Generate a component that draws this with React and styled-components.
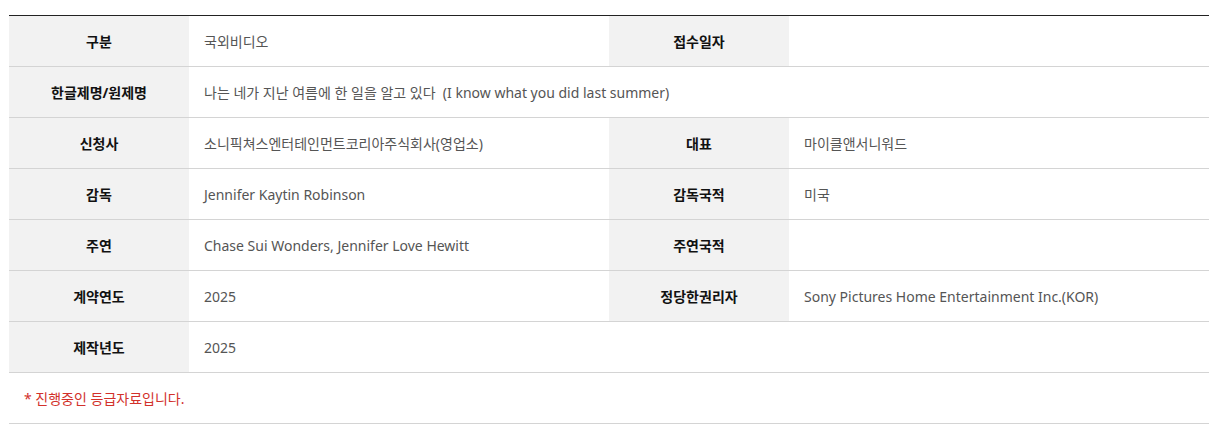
import React from 'react'
import styled, { createGlobalStyle } from 'styled-components'

const Global = createGlobalStyle`
  body {
    margin: 0;
    background: #fff;
    font-family: 'Noto Sans', 'Noto Sans CJK KR', sans-serif;
  }
`;

const Wrap = styled.div`
  padding: 15px 11px 0 9px;
`;

const Table = styled.div`
  border-top: 1px solid #222;
`;

const Row = styled.div`
  display: grid;
  grid-template-columns: 180px 420px 180px 420px;
  height: 50px;
  border-bottom: 1px solid #d4d4d4;
`;

const Label = styled.div`
  display: flex;
  align-items: center;
  justify-content: center;
  background: #f2f2f2;
  font-size: 14px;
  font-weight: 700;
  color: #111;
`;

const Value = styled.div`
  display: flex;
  align-items: center;
  padding-left: 15px;
  font-size: 14px;
  color: #555;
  grid-column: ${p => (p.$wide ? 'span 3' : 'span 1')};
  white-space: pre;
`;

const Note = styled.div`
  height: 50px;
  display: flex;
  align-items: center;
  padding-left: 15px;
  font-size: 14px;
  color: #d2312b;
  border-bottom: 1px solid #d4d4d4;
`;

const rows = [
  [['구분', '국외비디오'], ['접수일자', '']],
  [['한글제명/원제명', '나는 네가 지난 여름에 한 일을 알고 있다  (I know what you did last summer)', true]],
  [['신청사', '소니픽쳐스엔터테인먼트코리아주식회사(영업소)'], ['대표', '마이클앤서니워드']],
  [['감독', 'Jennifer Kaytin Robinson'], ['감독국적', '미국']],
  [['주연', 'Chase Sui Wonders, Jennifer Love Hewitt'], ['주연국적', '']],
  [['계약연도', '2025'], ['정당한권리자', 'Sony Pictures Home Entertainment Inc.(KOR)']],
  [['제작년도', '2025', true]],
];

export default function App() {
  return (
    <Wrap>
      <Global />
      <Table>
        {rows.map((cells, i) => (
          <Row key={i}>
            {cells.map(([label, value, wide]) => (
              <React.Fragment key={label}>
                <Label>{label}</Label>
                <Value $wide={wide}>{value}</Value>
              </React.Fragment>
            ))}
          </Row>
        ))}
        <Note>* 진행중인 등급자료입니다.</Note>
      </Table>
    </Wrap>
  )
}
